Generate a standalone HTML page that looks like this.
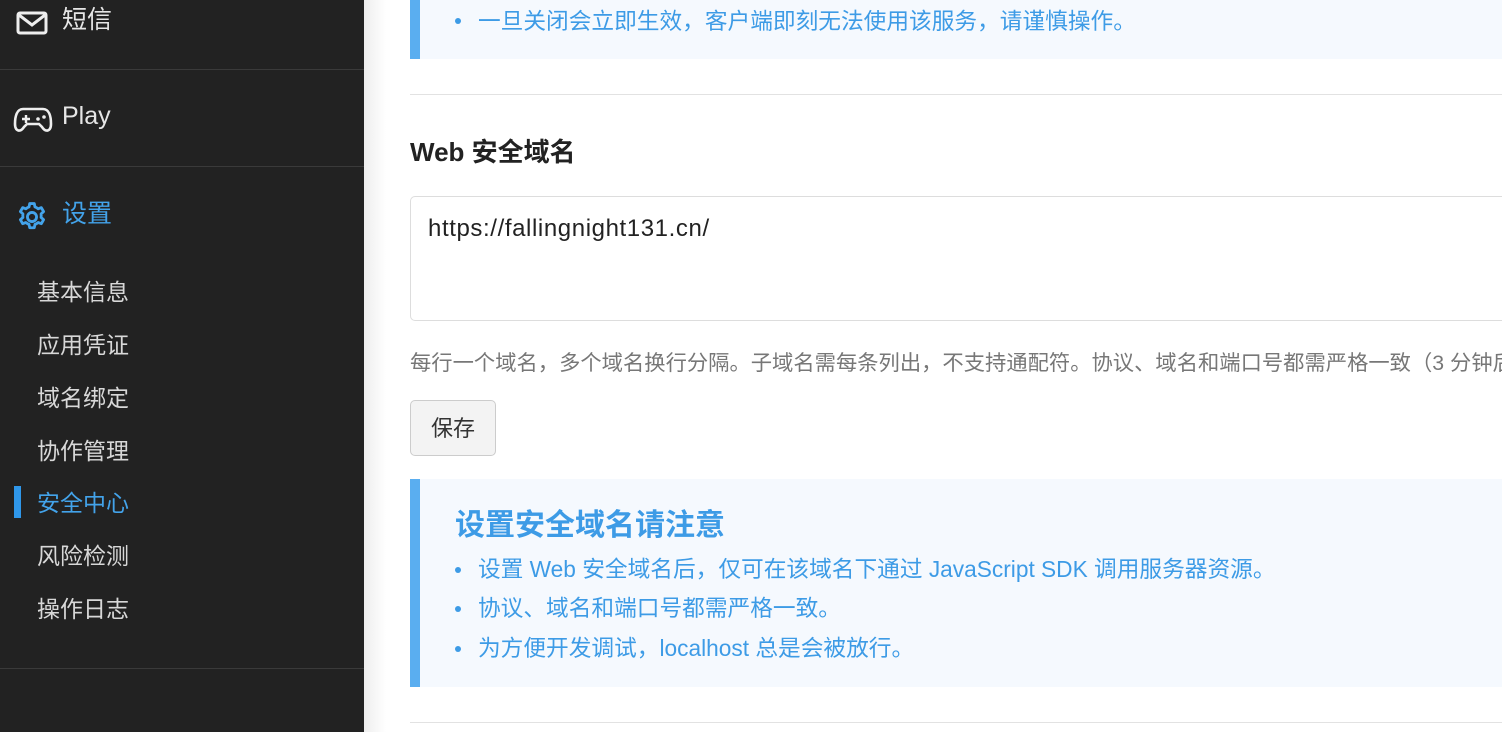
<!DOCTYPE html>
<html><head><meta charset="utf-8"><style>
*{margin:0;padding:0;box-sizing:border-box}
html,body{width:1502px;height:732px;overflow:hidden}
body{background:#fff;font-family:"Liberation Sans","Noto Sans CJK SC",sans-serif;position:relative}
.side{position:absolute;left:0;top:0;width:364px;height:732px;background:#222}
.shadow{position:absolute;left:364px;top:0;width:22px;height:732px;background:linear-gradient(to right,#eee,#fff)}
.sep{position:absolute;left:0;width:364px;height:1px;background:#3a3a3a}
.it{position:absolute;left:62px;font-size:25px;color:#e6e6e6;line-height:30px}
.sub{position:absolute;left:37px;font-size:23px;color:#d8d8d8;line-height:28px}
.abs{position:absolute}
.main{position:absolute;left:0;top:0;width:1502px;height:732px;overflow:hidden}
.note{position:absolute;left:410px;width:1092px;background:#f5f9fe;border-left:10px solid #5aaef0}
.li{position:absolute;left:478px;font-size:22.7px;color:#3d9be6;line-height:28px;white-space:nowrap}
.dot{position:absolute;left:455px;width:6px;height:6px;border-radius:50%;background:#3d9be6}
.hr{position:absolute;left:410px;width:1092px;height:1px;background:#e2e2e2}
</style></head><body>
<div class="side"></div>
<div class="shadow"></div>
<svg class="abs" style="left:16px;top:11px" width="32" height="24" viewBox="0 0 32 24"><rect x="2" y="2" width="28" height="20" rx="2" fill="none" stroke="#eee" stroke-width="3"/><path d="M3 4 L16 14 L29 4" fill="none" stroke="#eee" stroke-width="3"/></svg>
<div class="it" style="top:5px">短信</div>
<div class="sep" style="top:69px"></div>
<svg class="abs" style="left:13px;top:106px" width="40" height="28" viewBox="0 0 40 28"><path d="M10 3 H30 C36 3 38 10 38 18 C38 25 33 27 29 21 L26 18 H14 L11 21 C7 27 2 25 2 18 C2 10 4 3 10 3 Z" fill="none" stroke="#eee" stroke-width="2.6"/><path d="M9 13 H17 M13 9 V17" stroke="#eee" stroke-width="2.4"/><circle cx="25" cy="13" r="1.8" fill="#eee"/><circle cx="31" cy="11" r="1.8" fill="#eee"/></svg>
<div class="it" style="top:101px">Play</div>
<div class="sep" style="top:166px"></div>
<svg class="abs" style="left:15px;top:200px" width="34" height="34" viewBox="0 0 24 24"><path d="M12 2.5 l1.6 0 .5 2.4 a7.5 7.5 0 0 1 2.2 1.3 l2.3-.8 1.6 2.8-1.8 1.6 a7.5 7.5 0 0 1 0 2.5 l1.8 1.6-1.6 2.8-2.3-.8 a7.5 7.5 0 0 1-2.2 1.3 l-.5 2.4 h-3.2 l-.5-2.4 a7.5 7.5 0 0 1-2.2-1.3 l-2.3.8-1.6-2.8 1.8-1.6 a7.5 7.5 0 0 1 0-2.5 L3.8 8.2 5.4 5.4 l2.3.8 A7.5 7.5 0 0 1 9.9 4.9 l.5-2.4 Z" fill="none" stroke="#43a3ea" stroke-width="2" stroke-linejoin="round"/><circle cx="12" cy="12" r="3.2" fill="none" stroke="#43a3ea" stroke-width="2"/></svg>
<div class="it" style="top:199px;color:#43a3ea">设置</div>
<div class="sub" style="top:278px">基本信息</div>
<div class="sub" style="top:331px">应用凭证</div>
<div class="sub" style="top:384px">域名绑定</div>
<div class="sub" style="top:437px">协作管理</div>
<div class="abs" style="left:14px;top:486px;width:7px;height:32px;background:#2f97ea"></div>
<div class="sub" style="top:489px;color:#43a3ea">安全中心</div>
<div class="sub" style="top:542px">风险检测</div>
<div class="sub" style="top:595px">操作日志</div>
<div class="sep" style="top:668px"></div>

<div class="main">
<div class="note" style="top:0;height:59px"></div>
<div class="dot" style="top:18px"></div>
<div class="li" style="top:7px">一旦关闭会立即生效，客户端即刻无法使用该服务，请谨慎操作。</div>
<div class="hr" style="top:94px"></div>
<div class="abs" style="left:410px;top:132px;font-size:26px;font-weight:bold;color:#222">Web 安全域名</div>
<div class="abs" style="left:410px;top:196px;width:1092px;height:125px;border:1px solid #ddd;border-right:none;border-radius:5px 0 0 5px"></div>
<div class="abs" style="left:428px;top:215px;font-size:24px;letter-spacing:0.6px;color:#222">https://fallingnight131.cn/</div>
<div class="abs" style="left:410px;top:346px;width:1092px;overflow:hidden;font-size:21.3px;color:#777;white-space:nowrap">每行一个域名，多个域名换行分隔。子域名需每条列出，不支持通配符。协议、域名和端口号都需严格一致（3 分钟后生效）</div>
<div class="abs" style="left:410px;top:400px;width:86px;height:56px;border:1px solid #ccc;border-radius:5px;background:#f3f3f3;font-size:22px;color:#333;text-align:center;line-height:56px">保存</div>
<div class="note" style="top:479px;height:208px"></div>
<div class="abs" style="left:455px;top:500px;font-size:30px;font-weight:bold;color:#3d9be6">设置安全域名请注意</div>
<div class="dot" style="top:567px"></div>
<div class="li" style="top:555px">设置 Web 安全域名后，仅可在该域名下通过 JavaScript SDK 调用服务器资源。</div>
<div class="dot" style="top:606px"></div>
<div class="li" style="top:594px">协议、域名和端口号都需严格一致。</div>
<div class="dot" style="top:646px"></div>
<div class="li" style="top:634px">为方便开发调试，localhost 总是会被放行。</div>
<div class="hr" style="top:722px"></div>
</div>
</body></html>
